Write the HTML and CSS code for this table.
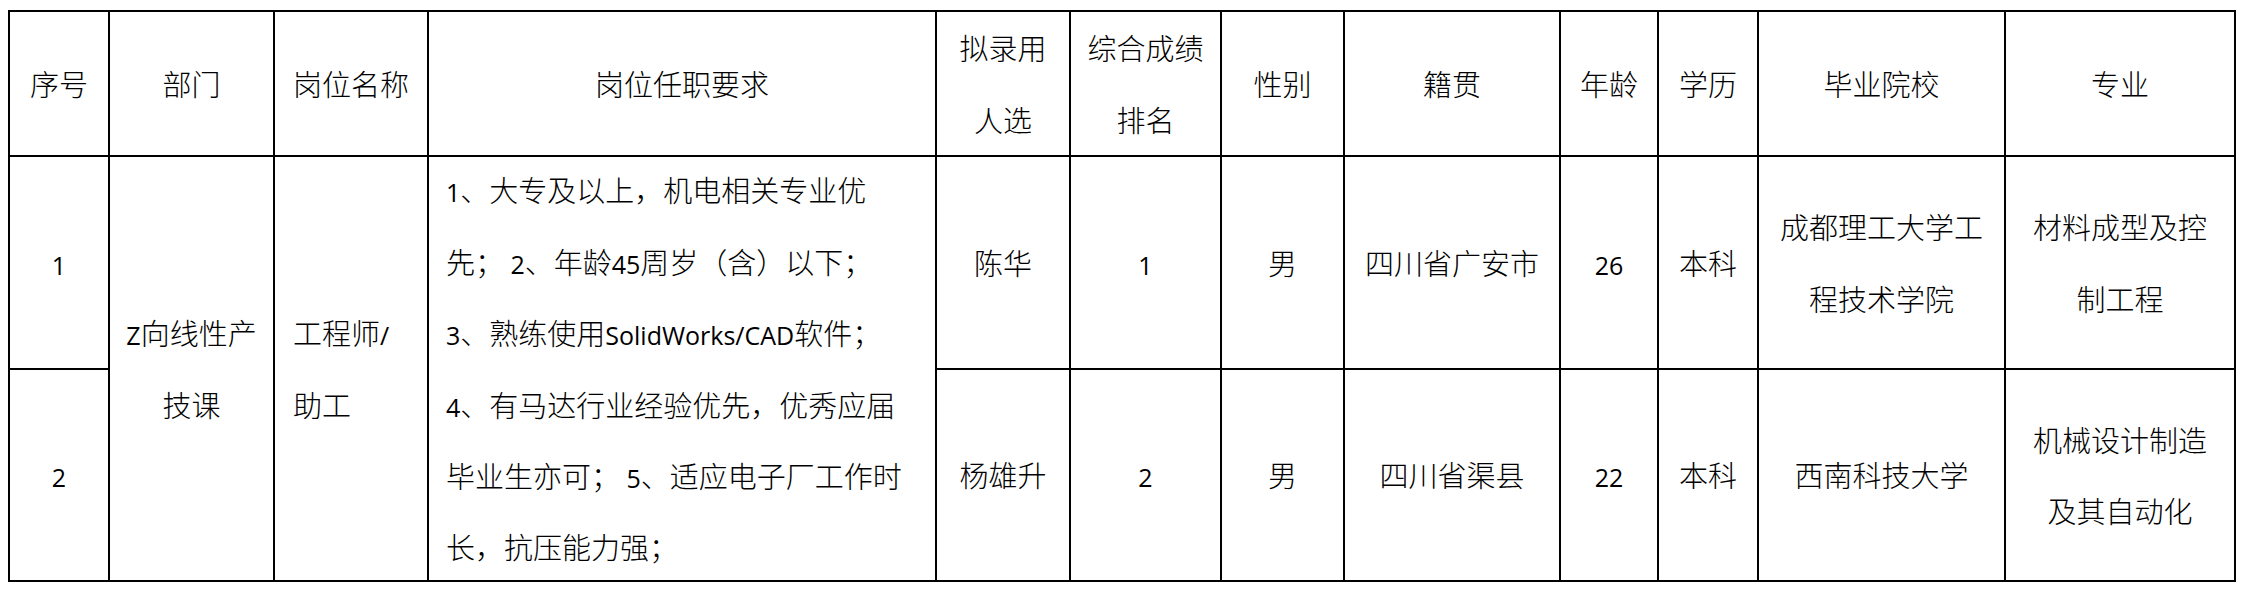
FILE: index.html
```html
<!DOCTYPE html>
<html lang="zh-CN">
<head>
<meta charset="utf-8">
<title>拟录用人选公示</title>
<link rel="stylesheet" href="styles.css">
</head>
<body>
<table class="grid">
  <colgroup>
    <col class="c-no">
    <col class="c-dept">
    <col class="c-post">
    <col class="c-req">
    <col class="c-name">
    <col class="c-rank">
    <col class="c-sex">
    <col class="c-home">
    <col class="c-age">
    <col class="c-edu">
    <col class="c-school">
    <col class="c-major">
  </colgroup>
  <tr class="row-head">
    <th>序号</th>
    <th>部门</th>
    <th>岗位名称</th>
    <th>岗位任职要求</th>
    <th>拟录用<br>人选</th>
    <th>综合成绩<br>排名</th>
    <th>性别</th>
    <th>籍贯</th>
    <th>年龄</th>
    <th>学历</th>
    <th>毕业院校</th>
    <th>专业</th>
  </tr>
  <tr class="row-1">
    <td><span class="lat">1</span></td>
    <td rowspan="2"><span class="lat">Z</span>向线性产<br>技课</td>
    <td rowspan="2" class="left"><div class="post">工程师<span class="lat">/</span><br>助工</div></td>
    <td rowspan="2" class="left req-cell"><div class="req"><span class="lat">1</span>、大专及以上，机电相关专业优<br>先； <span class="lat">2</span>、年龄<span class="lat">45</span>周岁（含）以下；<br><span class="lat">3</span>、熟练使用<span class="lat">SolidWorks/CAD</span>软件；<br><span class="lat">4</span>、有马达行业经验优先，优秀应届<br>毕业生亦可； <span class="lat">5</span>、适应电子厂工作时<br>长，抗压能力强；</div></td>
    <td>陈华</td>
    <td><span class="lat">1</span></td>
    <td>男</td>
    <td>四川省广安市</td>
    <td><span class="lat">26</span></td>
    <td>本科</td>
    <td>成都理工大学工<br>程技术学院</td>
    <td>材料成型及控<br>制工程</td>
  </tr>
  <tr class="row-2">
    <td><span class="lat">2</span></td>
    <td>杨雄升</td>
    <td><span class="lat">2</span></td>
    <td>男</td>
    <td>四川省渠县</td>
    <td><span class="lat">22</span></td>
    <td>本科</td>
    <td>西南科技大学</td>
    <td>机械设计制造<br>及其自动化</td>
  </tr>
</table>
</body>
</html>
```

FILE: styles.css
```css
html, body {
  background: #ffffff;
}

body {
  margin: 10px 0 0 8px;
  font-family: "Noto Sans CJK SC", "Noto Sans CJK JP", sans-serif;
  font-size: 29px;
  font-weight: 300;
  color: #000000;
}

.grid {
  border-collapse: collapse;
  table-layout: fixed;
  width: 2228px;
}

.grid th,
.grid td {
  border: 2px solid #000000;
  padding: 0;
  text-align: center;
  vertical-align: middle;
  line-height: 71.5px;
  font-weight: 300;
  white-space: nowrap;
  overflow: hidden;
}

.c-no { width: 100px; }
.c-dept { width: 165px; }
.c-post { width: 154px; }
.c-req { width: 508px; }
.c-name { width: 134px; }
.c-rank { width: 151px; }
.c-sex { width: 123px; }
.c-home { width: 216px; }
.c-age { width: 98px; }
.c-edu { width: 100px; }
.c-school { width: 247px; }
.c-major { width: 230px; }

.row-head { height: 143px; }
.row-1 { height: 213px; }
.row-2 { height: 212px; }

.grid td.left {
  text-align: left;
  padding-left: 18px;
}

.grid td.req-cell {
  padding-left: 17px;
}

.req {
  line-height: 71.4px;
  margin: -4px 0;
}

.lat {
  font-family: "Open Sans", "Noto Sans", sans-serif;
  font-size: 25px;
  font-weight: 400;
  line-height: 1;
}
```
